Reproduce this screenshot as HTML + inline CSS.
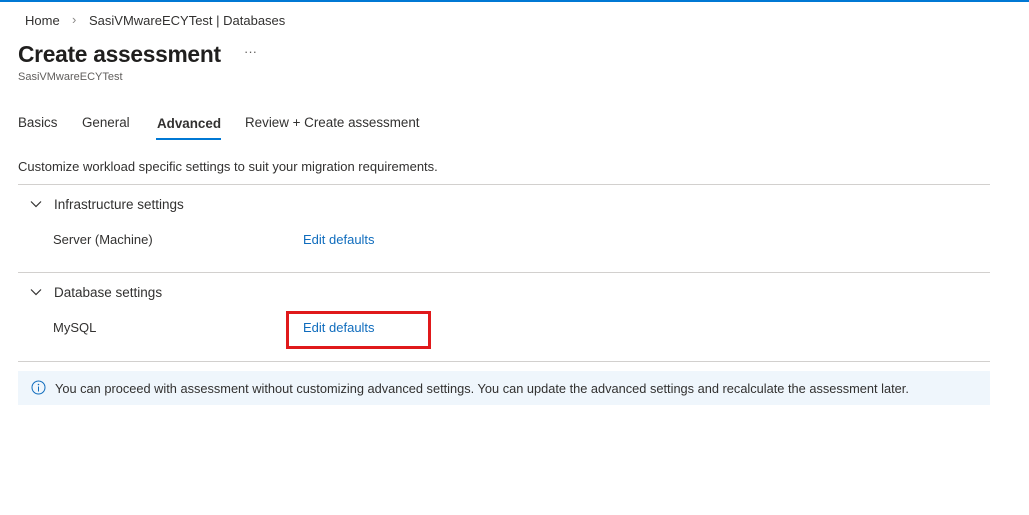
<!DOCTYPE html>
<html><head><style>
body{margin:0;width:1029px;height:515px;background:#fff;font-family:"Liberation Sans",sans-serif;color:#323130;position:relative;overflow:hidden}
.a{position:absolute;white-space:nowrap}
.hr{position:absolute;left:18px;width:972px;height:1px;background:#d2d0ce}
.link{color:#0f6cbd;font-size:13px}
</style></head><body>
<div class="a" style="left:0;top:0;width:1029px;height:2px;background:#0078d4"></div>
<div class="a" style="left:25px;top:13px;font-size:13px">Home</div>
<div class="a" style="left:72px;top:12px;font-size:13px;color:#8a8886">›</div>
<div class="a" style="left:89px;top:13px;font-size:13px">SasiVMwareECYTest | Databases</div>
<div class="a" style="left:18px;top:41px;font-size:22.8px;font-weight:600;color:#201f1e;letter-spacing:-0.3px">Create assessment</div>
<div class="a" style="left:244px;top:44px;font-size:13px;color:#605e5c">···</div>
<div class="a" style="left:18px;top:71px;font-size:11px;color:#605e5c">SasiVMwareECYTest</div>
<div class="a" style="left:18px;top:115px;font-size:13.4px">Basics</div>
<div class="a" style="left:82px;top:115px;font-size:13.4px">General</div>
<div class="a" style="left:157px;top:116px;font-size:13.4px;font-weight:600">Advanced</div>
<div class="a" style="left:156px;top:138px;width:65px;height:2px;background:#0078d4"></div>
<div class="a" style="left:245px;top:115px;font-size:13.4px">Review + Create assessment</div>
<div class="a" style="left:18px;top:159px;font-size:13px">Customize workload specific settings to suit your migration requirements.</div>
<div class="hr" style="top:184px"></div>
<svg class="a" style="left:30px;top:200px" width="12" height="8"><path d="M1 1.5l5 5 5-5" stroke="#323130" fill="none" stroke-width="1.2"/></svg>
<div class="a" style="left:54px;top:197px;font-size:13.5px">Infrastructure settings</div>
<div class="a" style="left:53px;top:232px;font-size:13px">Server (Machine)</div>
<div class="a link" style="left:303px;top:232px">Edit defaults</div>
<div class="hr" style="top:272px"></div>
<svg class="a" style="left:30px;top:288px" width="12" height="8"><path d="M1 1.5l5 5 5-5" stroke="#323130" fill="none" stroke-width="1.2"/></svg>
<div class="a" style="left:54px;top:285px;font-size:13.5px">Database settings</div>
<div class="a" style="left:53px;top:320px;font-size:13px">MySQL</div>
<div class="a link" style="left:303px;top:320px">Edit defaults</div>
<div class="a" style="left:286px;top:311px;border:3px solid #e0191b;width:139px;height:32px"></div>
<div class="hr" style="top:361px"></div>
<div class="a" style="left:18px;top:371px;width:972px;height:34px;background:#eff6fc"></div>
<svg class="a" style="left:31px;top:380px" width="15" height="15"><circle cx="7.5" cy="7.5" r="6.5" stroke="#0f6cbd" fill="none" stroke-width="1"/><rect x="7" y="6.5" width="1" height="5" fill="#0f6cbd"/><circle cx="7.5" cy="4.5" r="0.8" fill="#0f6cbd"/></svg>
<div class="a" style="left:55px;top:381px;font-size:12.8px">You can proceed with assessment without customizing advanced settings. You can update the advanced settings and recalculate the assessment later.</div>
</body></html>
